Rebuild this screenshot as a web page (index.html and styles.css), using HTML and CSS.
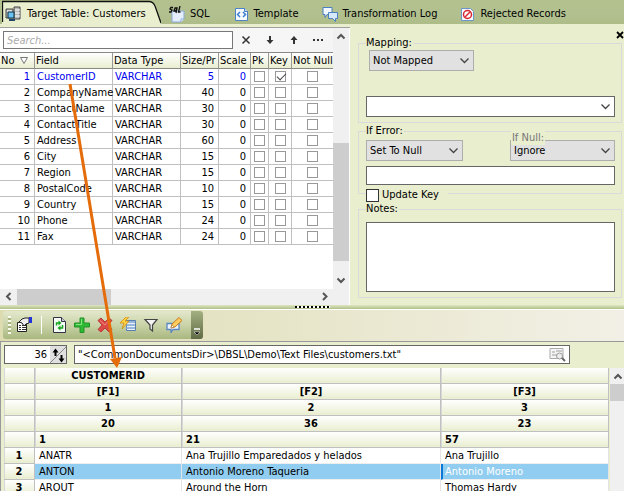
FILE: index.html
```html
<!DOCTYPE html>
<html lang="en">
<head>
<meta charset="utf-8">
<title>Target Table: Customers</title>
<link rel="stylesheet" href="styles.css">
</head>
<body>
<nav class="tabs">
  <button class="tab tab-active">
    <svg class="tab-edge" viewBox="0 0 159 24" preserveAspectRatio="none"><path d="M0 24V1H147Q151 1 153 5L159 24Z" fill="#e9eecf"/><path d="M.5 22V1.5H147Q151 1.500 153 6L159 23" fill="none" stroke="#111" stroke-width="1.300"/></svg>
    <svg class="icon" width="17" height="16" viewBox="0 0 17 16"><path d="M1 3h7v9H1zM9 1h6v12H9z" fill="#bbb" stroke="#444"/><path d="M2 5h5M10 4h5M10 7h5M10 10h5" stroke="#fff"/><path d="M3 6h6v6H3z" fill="#6ac0f0" stroke="#134"/><path d="M4 14h6" stroke="#246" stroke-width="2"/></svg>
    <span>Target Table: Customers</span>
  </button>
  <button class="tab tab-sql"><svg class="icon" width="16" height="17" viewBox="0 0 16 17"><path d="M3 5h12v8l-3 3H3z" fill="#e4eefc" stroke="#8aa9d6"/><path d="M12 16v-3h3" fill="#fff" stroke="#8aa9d6"/><path d="M4 1.500H2L1 3l2 1-1 2H0M8 2L6 2 5 5l2 0zM8 2L7 7M11 0L9.500 6h2" fill="none" stroke="#111" stroke-width="1.300"/></svg><span>SQL</span></button>
  <button class="tab tab-template"><svg class="icon" width="15" height="15" viewBox="0 0 15 15"><path d="M1.500 1.500h9l3 3v9h-12z" fill="#f5faff" stroke="#4d82c4"/><path d="M10.500 1v3.500H14" fill="#b5d0f0" stroke="#4d82c4"/><path d="M6 5L3.500 7.500 6 10M9 5l2.500 2.500L9 10" fill="none" stroke="#3c7fd0" stroke-width="1.500"/></svg><span>Template</span></button>
  <button class="tab tab-log"><svg class="icon" width="17" height="16" viewBox="0 0 17 16"><path d="M1 1.500h9v7H5l-2 3v-3H1z" fill="#f2f8ff" stroke="#4b7fc0"/><path d="M6.500 6.500h9v6h-2v3l-3-3h-4z" fill="#d5e8fc" stroke="#4b7fc0"/></svg><span>Transformation Log</span></button>
  <button class="tab tab-rejected"><svg class="icon" width="15" height="15" viewBox="0 0 15 15"><path d="M1.500 1.500h9l3 3v9h-12z" fill="#f5faff" stroke="#6a96c8"/><circle cx="7.500" cy="7.500" r="4" fill="#fff" stroke="#d8262c" stroke-width="1.500"/><path d="M5 10l5-5" stroke="#d8262c" stroke-width="1.500"/></svg><span>Rejected Records</span></button>
</nav>

<main class="upper">
  <section class="fields">
    <div class="fields-main">
      <div class="search">
        <input type="text" placeholder="Search..." aria-label="Search">
        <button aria-label="Clear"><svg width="10" height="10" viewBox="0 0 10 10"><path d="M1.500 1.500l7 7M8.500 1.500l-7 7" stroke="#333" stroke-width="1.500"/></svg></button>
        <button aria-label="Next"><svg width="10" height="10" viewBox="0 0 10 10"><path d="M5 1v5" stroke="#333" stroke-width="2"/><path d="M1.500 5h7L5 9z" fill="#333"/></svg></button>
        <button aria-label="Previous"><svg width="10" height="10" viewBox="0 0 10 10"><path d="M5 9V4" stroke="#333" stroke-width="2"/><path d="M1.500 5h7L5 1z" fill="#333"/></svg></button>
        <button aria-label="More"><svg width="10" height="10" viewBox="0 0 10 10"><path d="M0 5h2M4 5h2M8 5h2" stroke="#333" stroke-width="2"/></svg></button>
      </div>
      <table class="field-table">
        <colgroup><col class="c-no"><col class="c-field"><col class="c-type"><col class="c-size"><col class="c-scale"><col class="c-pk"><col class="c-key"><col></colgroup>
        <thead><tr><th>No <svg class="sort" width="8" height="7" viewBox="0 0 8 7"><path d="M.5 .5h7L4 6.500z" fill="#fff" stroke="#777"/></svg></th><th>Field</th><th>Data Type</th><th>Size/Pr</th><th>Scale</th><th>Pk</th><th>Key</th><th>Not Null</th></tr></thead>
        <tbody>
          <tr class="mapped"><td>1</td><td>CustomerID</td><td>VARCHAR</td><td>5</td><td>0</td><td><input type="checkbox" aria-label="Pk"></td><td><input type="checkbox" aria-label="Key" checked></td><td><input type="checkbox" aria-label="Not Null"></td></tr>
          <tr><td>2</td><td>CompanyName</td><td>VARCHAR</td><td>40</td><td>0</td><td><input type="checkbox" aria-label="Pk"></td><td><input type="checkbox" aria-label="Key"></td><td><input type="checkbox" aria-label="Not Null"></td></tr>
          <tr><td>3</td><td>ContactName</td><td>VARCHAR</td><td>30</td><td>0</td><td><input type="checkbox" aria-label="Pk"></td><td><input type="checkbox" aria-label="Key"></td><td><input type="checkbox" aria-label="Not Null"></td></tr>
          <tr><td>4</td><td>ContactTitle</td><td>VARCHAR</td><td>30</td><td>0</td><td><input type="checkbox" aria-label="Pk"></td><td><input type="checkbox" aria-label="Key"></td><td><input type="checkbox" aria-label="Not Null"></td></tr>
          <tr><td>5</td><td>Address</td><td>VARCHAR</td><td>60</td><td>0</td><td><input type="checkbox" aria-label="Pk"></td><td><input type="checkbox" aria-label="Key"></td><td><input type="checkbox" aria-label="Not Null"></td></tr>
          <tr><td>6</td><td>City</td><td>VARCHAR</td><td>15</td><td>0</td><td><input type="checkbox" aria-label="Pk"></td><td><input type="checkbox" aria-label="Key"></td><td><input type="checkbox" aria-label="Not Null"></td></tr>
          <tr><td>7</td><td>Region</td><td>VARCHAR</td><td>15</td><td>0</td><td><input type="checkbox" aria-label="Pk"></td><td><input type="checkbox" aria-label="Key"></td><td><input type="checkbox" aria-label="Not Null"></td></tr>
          <tr><td>8</td><td>PostalCode</td><td>VARCHAR</td><td>10</td><td>0</td><td><input type="checkbox" aria-label="Pk"></td><td><input type="checkbox" aria-label="Key"></td><td><input type="checkbox" aria-label="Not Null"></td></tr>
          <tr><td>9</td><td>Country</td><td>VARCHAR</td><td>15</td><td>0</td><td><input type="checkbox" aria-label="Pk"></td><td><input type="checkbox" aria-label="Key"></td><td><input type="checkbox" aria-label="Not Null"></td></tr>
          <tr><td>10</td><td>Phone</td><td>VARCHAR</td><td>24</td><td>0</td><td><input type="checkbox" aria-label="Pk"></td><td><input type="checkbox" aria-label="Key"></td><td><input type="checkbox" aria-label="Not Null"></td></tr>
          <tr><td>11</td><td>Fax</td><td>VARCHAR</td><td>24</td><td>0</td><td><input type="checkbox" aria-label="Pk"></td><td><input type="checkbox" aria-label="Key"></td><td><input type="checkbox" aria-label="Not Null"></td></tr>
        </tbody>
      </table>
    </div>
    <div class="vscroll"><svg width="16" height="16" viewBox="0 0 16 16"><path d="M4.500 10.500L8 7l3.500 3.500" fill="none" stroke="#555" stroke-width="2"/></svg><i class="thumb"></i><svg width="16" height="16" viewBox="0 0 16 16"><path d="M4.500 5.500L8 9l3.500-3.500" fill="none" stroke="#555" stroke-width="2"/></svg></div>
    <div class="hscroll"><svg width="17" height="15" viewBox="0 0 17 15"><path d="M10.500 4L7 7.500l3.500 3.500" fill="none" stroke="#555" stroke-width="2"/></svg><i class="thumb"></i><svg width="17" height="15" viewBox="0 0 17 15"><path d="M7 4l3.500 3.500L7 11" fill="none" stroke="#555" stroke-width="2"/></svg></div>
  </section>

  <form class="props">
    <button type="button" class="close" aria-label="Close"><svg width="8" height="8" viewBox="0 0 8 8"><path d="M1 1l6 6M7 1L1 7" stroke="#000" stroke-width="1.800"/></svg></button>
    <fieldset class="box-map">
      <legend><label for="mapping">Mapping:</label></legend>
      <select id="mapping" class="drop"><option>Not Mapped</option></select>
      <select class="drop combo" aria-label="Mapped value"><option></option></select>
    </fieldset>
    <fieldset class="box-error">
      <legend><label for="iferror">If Error:</label></legend>
      <label class="null-label" for="ifnull">If Null:</label>
      <div class="pair">
        <select id="iferror" class="drop"><option>Set To Null</option></select>
        <select id="ifnull" class="drop"><option>Ignore</option></select>
      </div>
      <input type="text" class="value" aria-label="Error value">
    </fieldset>
    <label class="update"><input type="checkbox">Update Key</label>
    <fieldset class="box-notes">
      <legend><label for="notes">Notes:</label></legend>
      <textarea id="notes"></textarea>
    </fieldset>
  </form>
</main>

<div class="splitter"><i></i></div>

<div class="toolbar">
  <div class="tools">
    <i class="grip"></i>
    <button aria-label="Properties"><svg width="16" height="16" viewBox="0 0 16 16"><path d="M1.500 5.500h9v9h-9z" fill="#fff" stroke="#222"/><path d="M3 8.500h2M6 8.500h4M3 10.500h2M6 10.500h4M3 12.500h2M6 12.500h4" stroke="#333"/><path d="M3 5l3-3 3-1h4v5l-3 1-2 2-2-3z" fill="#eee" stroke="#222"/><path d="M13 0h3v6h-3z" fill="#2433d8"/></svg></button>
    <i class="sep"></i>
    <button aria-label="Refresh"><svg width="16" height="16" viewBox="0 0 16 16"><path d="M2.500 .5h8l4 4v11h-12z" fill="#f4fbf4" stroke="#334"/><path d="M10.500 .5v4h4" fill="#ccd" stroke="#334"/><path d="M5.500 8.500V6H8M11.500 8v3H9" fill="none" stroke="#14a51c" stroke-width="1.500"/><path d="M7.500 3.500l3 2.500-3 2.500zM9.500 8.500l-3 2.500 3 2.500z" fill="#14a51c"/></svg></button>
    <button aria-label="Add"><svg width="16" height="16" viewBox="0 0 16 16"><path d="M6 1h4v5h5.500v4H10v5.500H6V10H.5V6H6z" fill="#2fba35" stroke="#239128"/><path d="M7.500 2v5.500H2" fill="none" stroke="#8be485"/></svg></button>
    <button aria-label="Delete"><svg width="16" height="16" viewBox="0 0 16 16"><path d="M1 3.500L4 1l4 4 4-4 3 2.500L11 8l4 4.500-3 2.500-4-4-4 4-3-2.500L5 8z" fill="#dc4a48" stroke="#b83a3a"/><path d="M3 3.500l5 4.500 4-5" fill="none" stroke="#f28b80"/></svg></button>
    <button aria-label="Run"><svg width="16" height="16" viewBox="0 0 16 16"><path d="M6.500 3.500h9v10h-9z" fill="#e8f2fc" stroke="#587db0"/><path d="M6 5h9M6 8h9M6 11h9" stroke="#7fa3cf" stroke-width="1.500"/><path d="M6 0L0 6h4l-2 6 7-8H5l4-4z" fill="#ffd341" stroke="#d48a10" stroke-width=".8"/></svg></button>
    <button aria-label="Filter"><svg width="16" height="16" viewBox="0 0 16 16"><path d="M2 2.500h12L9.500 8v6L7 12V8z" fill="#f3f3f3" stroke="#444" stroke-width="1.200"/></svg></button>
    <button aria-label="Edit"><svg width="16" height="16" viewBox="0 0 16 16"><path d="M1 6.500h12v6H7l-2 3v-3H1z" fill="#edf5ff" stroke="#5b86c0" stroke-width="1.300"/><path d="M5 11l1-4 7-6.500 3 3L9 10z" fill="#ffcb5c" stroke="#c27a20"/><path d="M5 11l1-3 2 2z" fill="#fff" stroke="#a67832" stroke-width=".6"/></svg></button>
    <button class="more" aria-label="More tools"><svg width="8" height="8" viewBox="0 0 8 8"><path d="M1 1h6" stroke="#fff" stroke-width="1.500"/><path d="M1 4h6L4 7z" fill="#000" stroke="#fff" stroke-width=".5"/></svg></button>
  </div>
</div>

<section class="lower">
  <div class="source">
    <div class="spin"><input type="text" value="36" aria-label="Record"><button aria-label="Step"><svg width="16" height="16" viewBox="0 0 16 16"><path d="M0 16L16 0" stroke="#888"/><path d="M5.500 3v6M11.500 8v5" stroke="#000" stroke-width="2"/><path d="M2.500 5.500h6l-3-4zM8.500 11.500h6l-3 4z"/></svg></button></div>
    <div class="path"><input type="text" value="&quot;&lt;CommonDocumentsDir&gt;\DBSL\Demo\Text Files\customers.txt&quot;" aria-label="Source file"><button aria-label="Browse"><svg width="17" height="14" viewBox="0 0 17 14"><path d="M1 .5h13v10H1z" fill="#f5f5f5" stroke="#aaa"/><path d="M3 4h3M7 3h6M3 7h5" stroke="#bbb" stroke-width="1.500"/><circle cx="10.500" cy="8" r="3" fill="#eee" stroke="#999"/><path d="M13 10l3 3" stroke="#666" stroke-width="2"/></svg></button></div>
  </div>
  <div class="data">
    <table class="data-table">
      <colgroup><col class="d-no"><col class="d-one"><col class="d-two"><col></colgroup>
      <thead>
        <tr><th></th><th>CUSTOMERID</th><th></th><th></th></tr>
        <tr><th></th><th>[F1]</th><th>[F2]</th><th>[F3]</th></tr>
        <tr><th></th><th>1</th><th>2</th><th>3</th></tr>
        <tr><th></th><th>20</th><th>36</th><th>23</th></tr>
        <tr class="start"><th></th><th>1</th><th>21</th><th>57</th></tr>
      </thead>
      <tbody>
        <tr><th>1</th><td>ANATR</td><td>Ana Trujillo Emparedados y helados</td><td>Ana Trujillo</td></tr>
        <tr class="selected"><th>2</th><td>ANTON</td><td>Antonio Moreno Taqueria</td><td class="focus">Antonio Moreno</td></tr>
        <tr><th>3</th><td>AROUT</td><td>Around the Horn</td><td>Thomas Hardy</td></tr>
      </tbody>
    </table>
    <div class="vscroll"><svg width="16" height="16" viewBox="0 0 16 16"><path d="M4.500 10.500L8 7l3.500 3.500" fill="none" stroke="#555" stroke-width="2"/></svg><i class="thumb"></i></div>
  </div>
</section>

<svg class="arrow" width="64" height="292" viewBox="0 0 64 292"><path d="M11 7L56 281" stroke="#e46c0a" stroke-width="3"/><path d="M51 282l12-2-5 11z" fill="#e46c0a"/></svg>
</body>
</html>
```

FILE: styles.css
```css
* { box-sizing: border-box; }
body {
  margin: 0;
  height: 100vh;
  overflow: hidden;
  display: flex;
  flex-direction: column;
  position: relative;
  background: #e9eecf;
  color: #000;
  font: 11px/14px "DejaVu Sans Condensed", "DejaVu Sans", sans-serif;
}
input, select, button, textarea { font: inherit; color: inherit; margin: 0; padding: 0; border-radius: 0; }
button { background: none; border: 0; display: flex; align-items: center; }
svg { display: block; flex: none; }

/* Tabs */
.tabs { display: flex; flex: none; height: 24px; background: linear-gradient(#b3c18d, #b2c090 60%, #aebc88); }
.tab { height: 24px; padding-top: 4px; gap: 5px; position: relative; white-space: nowrap; }
.tab .icon, .tab span { position: relative; }
.tab-active { margin-left: 2px; padding-left: 3px; width: 159px; }
.tab-edge { position: absolute; inset: 0; width: 100%; height: 100%; }
.tab-sql { margin-left: 8px; }
.tab-template { margin-left: 24px; }
.tab-log { margin-left: 23px; gap: 4px; }
.tab-rejected { margin-left: 23px; }

/* Upper area */
.upper { display: grid; grid-template-columns: 350fr 274fr; flex: none; padding-top: 3px; }
.fields {
  display: grid;
  grid-template: 1fr 16px / 1fr 16px;
  padding-right: 1px;
  background: #fff;
  border-top: 1px solid #a0a0a0;
  height: 278px;
}
.search { display: flex; align-items: center; gap: 14px; height: 24px; padding: 0 10px 0 3px; background: linear-gradient(90deg, #fff, #f4f4f4); }
.search input { flex: 1; min-width: 0; height: 18px; margin-right: -6px; padding: 0 3px; border: 1px solid #777; background: #fff; }
.search input::placeholder { color: #aaa; font-style: italic; }
table { border-collapse: separate; border-spacing: 0; table-layout: fixed; width: 100%; background: #fff; }
th, td { padding: 0; height: 16px; line-height: 15px; white-space: nowrap; text-align: left; }
.field-table { border-top: 1px solid #888; }
.field-table th { font-weight: normal; padding-left: 1px; border-right: 1px solid #999; border-bottom: 1px solid #888; background: linear-gradient(#fff, #e9eecf); }
.field-table td { padding-left: 2px; border-right: 1px solid #c0c0c0; border-bottom: 1px solid #c0c0c0; }
.field-table th:last-child, .field-table td:last-child { border-right: 0; }
.field-table td:nth-child(1), .field-table td:nth-child(4), .field-table td:nth-child(5) { text-align: right; padding-right: 4px; }
.field-table td:nth-child(n+6) { text-align: center; padding: 0; }
.c-no { width: 35px; }
.c-field { width: 78px; }
.c-type { width: 68px; }
.c-size { width: 38px; }
.c-scale { width: 32px; }
.c-pk { width: 18px; }
.c-key { width: 23px; }
.sort { display: inline-block; margin-left: 2px; }
.mapped { color: #0000f0; }
input[type="checkbox"] { appearance: none; width: 11px; height: 11px; border: 1px solid #999; background: #fff; }
.field-table input { display: inline-block; vertical-align: top; margin-top: 2px; position: relative; }
.field-table input:checked::after {
  content: "";
  position: absolute;
  left: 1px;
  top: 1px;
  width: 8px;
  height: 4px;
  border: solid #444;
  border-width: 0 0 1px 1px;
  transform: rotate(-45deg);
}
.vscroll, .hscroll { display: flex; background: #f0f0f0; }
.thumb { background: #cdcdcd; }
.vscroll { flex-direction: column; }
.fields .vscroll svg:first-child { margin-bottom: auto; }
.fields .vscroll .thumb { height: 118px; margin-bottom: 12px; }
.hscroll { grid-column: 1 / -1; align-items: stretch; padding-right: 16px; }
.hscroll .thumb { width: 94px; margin-right: auto; }

/* Mapping properties */
.props { position: relative; padding: 9px 2px 0 8px; }
.close { position: absolute; right: 0; top: 4px; }
fieldset { margin: 0; border: 1px solid #dadada; padding: 0 6px 0 7px; position: relative; min-width: 0; }
legend { padding: 0 1px 0 0; height: 14px; }
.drop {
  appearance: none;
  display: block;
  height: 21px;
  padding: 0 20px 0 3px;
  border: 1px solid #adadad;
  background: #e1e1e1 url("data:image/svg+xml,%3Csvg xmlns='http://www.w3.org/2000/svg' width='9' height='6'%3E%3Cpath d='M.5 .5l4 4 4-4' fill='none' stroke='%23444' stroke-width='1.300'/%3E%3C/svg%3E") no-repeat right 4px center;
  width: 105px;
}
.box-map { height: 87px; }
.box-map .drop { margin-left: 3px; }
.box-map .combo { width: 100%; margin: 25px 0 0; background-color: #fff; border-color: #666; }
.box-error { height: 70px; margin-top: 1px; }
.pair { display: flex; justify-content: space-between; padding-top: 2px; }
#iferror { width: 97px; }
.null-label { position: absolute; right: 76px; top: -7px; padding: 0 1px; background: #e9eecf; color: #777; }
.value { display: block; width: 100%; height: 19px; margin-top: 5px; border: 1px solid #666; background: #fff; }
.update { display: flex; align-items: center; gap: 3px; width: max-content; margin: -6px 0 0 8px; padding-right: 9px; position: relative; background: #e9eecf; }
.update input[type="checkbox"] { width: 13px; height: 13px; border-color: #333; }
.box-notes { height: 96px; }
textarea { display: block; width: 100%; height: 70px; margin-top: 6px; border: 1px solid #666; background: #fff; resize: none; }

/* Splitter and toolbar */
.splitter { flex: none; height: 5px; background: linear-gradient(#dfe6c2, #b0c088 80%, #fff 80%); }
.splitter i { display: block; width: 35px; height: 2px; margin: 1px auto 0; background: repeating-linear-gradient(90deg, #000 0 2px, #fff 2px 4px); }
.toolbar { flex: none; height: 32px; padding: 1px 3px; border-bottom: 1px solid #999; background: linear-gradient(90deg, #dddcb0, #f2f0e6); }
.tools { display: flex; align-items: center; width: 200px; height: 28px; padding-left: 5px; gap: 7px; border-radius: 3px; background: linear-gradient(#e3e8cc, #c9d3a8 50%, #a9b77f); }
.grip { flex: none; width: 3px; height: 18px; margin-right: -2px; background: repeating-linear-gradient(#f8faec 0 2px, #a7b480 2px 4px); }
.sep { flex: none; width: 1px; height: 18px; margin: 0 2px; background: #fff; }
.more { width: 12px; height: 28px; margin-left: auto; padding: 13px 2px 0; border-radius: 0 3px 3px 0; background: linear-gradient(#a3b080, #5f6b45); }

/* Source data */
.lower { flex: 1; min-height: 0; overflow: hidden; padding-left: 3px; border-left: 1px solid #999; }
.source { display: flex; gap: 7px; padding: 3px 54px 4px 0; }
.spin, .path { display: flex; align-items: center; height: 19px; border: 1px solid #666; background: #fff; }
.spin { width: 63px; }
.path { flex: 1; padding-right: 3px; }
.source input { flex: 1; min-width: 0; width: 20px; border: 0; background: none; padding: 0 3px; }
.spin input { text-align: right; }
.spin button { background: #e0e0e0; height: 17px; }
.data { display: flex; }
.data-table { flex: 1; width: auto; min-width: 0; }
.data-table th { font-weight: bold; text-align: center; border-right: 1px solid #c0c0c0; border-bottom: 1px solid #c0c0c0; background: linear-gradient(90deg, #d8d8d8 0 1px, transparent 1px), linear-gradient(#fff, #e9eecf); }
.data-table .start th { text-align: left; padding-left: 4px; }
.data-table td { padding-left: 4px; border-right: 1px solid #e4e4e4; border-bottom: 1px solid #eee; }
.data-table .selected td { background: #91cdf0; background-clip: padding-box; }
.data-table .selected .focus { color: #fff; border-left: 2px solid #0a78d8; padding-left: 2px; background-clip: border-box; }
.d-no { width: 31px; }
.d-one { width: 147px; }
.d-two { width: 259px; }
.data .vscroll { width: 16px; margin-right: -2px; margin-left: 1px; }
.data .thumb { height: 17px; }

.arrow { position: absolute; left: 59px; top: 77px; pointer-events: none; }
```
